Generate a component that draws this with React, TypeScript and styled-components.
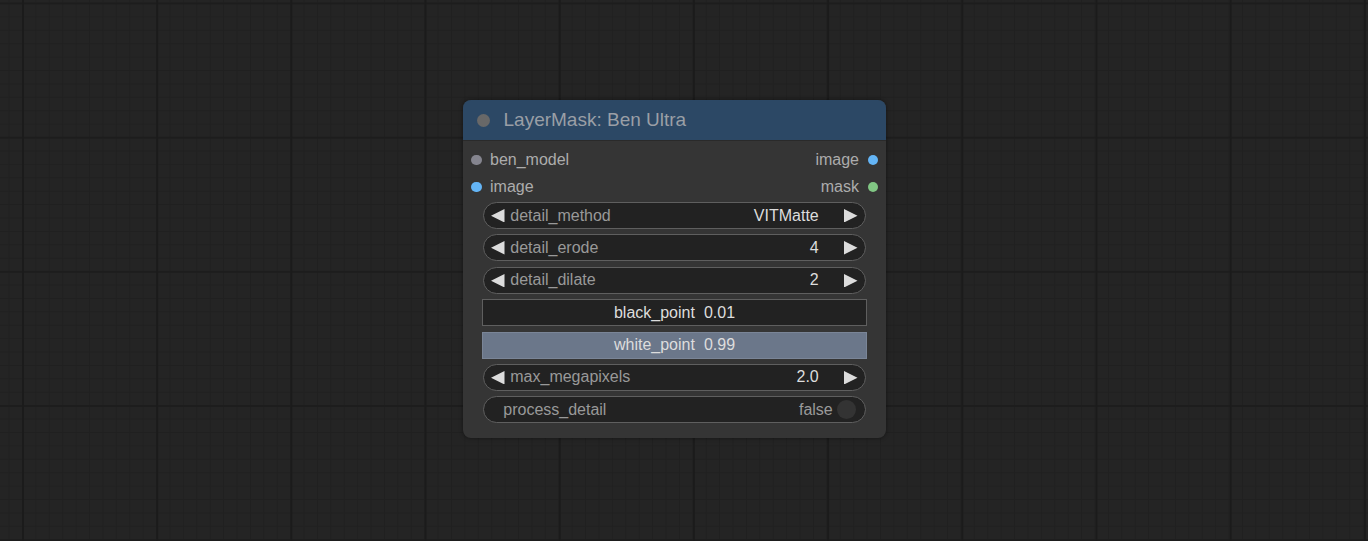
import React from "react";
import styled, { createGlobalStyle } from "styled-components";

const GlobalStyle = createGlobalStyle`
  html, body { margin: 0; padding: 0; background: #232323; }
  body { font-family: "Liberation Sans", Arial, sans-serif; }
`;

const Canvas = styled.div`
  position: relative;
  width: 1368px;
  height: 541px;
  overflow: hidden;
  background-color: #242424;
  background-image:
    linear-gradient(to right, #1b1b1b 0, #1b1b1b 2px, transparent 2px),
    linear-gradient(to bottom, #1d1d1d 0, #1d1d1d 2px, transparent 2px),
    linear-gradient(to right, #202020 0, #202020 1px, transparent 1px),
    linear-gradient(to bottom, #202020 0, #202020 1px, transparent 1px);
  background-size: 134.2px 100%, 100% 134.2px, 13.42px 100%, 100% 13.42px;
  background-position: 22px 0, 0 2.5px, 8.6px 0, 0 3px;
`;

const Node = styled.div`
  position: absolute;
  left: 463px;
  top: 100px;
  width: 423px;
  border-radius: 8px;
  background: #353535;
  box-shadow: 0 0 4px rgba(0, 0, 0, 0.45);
  font-family: "Liberation Sans", Arial, sans-serif;
`;

const Title = styled.div`
  height: 40.5px;
  display: flex;
  align-items: center;
  gap: 14px;
  padding-left: 13.5px;
  padding-top: 1px;
  background: #2c4865;
  border-radius: 8px 8px 0 0;
  border-bottom: 1px solid #2a2a2a;
  box-sizing: border-box;
  color: #9a9fa6;
  font-size: 19px;
`;

const TitleDot = styled.span`
  width: 13px;
  height: 13px;
  border-radius: 50%;
  background: #686868;
`;

const Body = styled.div`
  padding: 6px 20.25px 15px;
  display: flex;
  flex-direction: column;
`;

const SlotRow = styled.div`
  height: 27px;
  margin: 0 -20.25px;
  display: flex;
  align-items: center;
  justify-content: space-between;
  font-size: 16px;
  color: #acacac;
`;

const Slot = styled.div<{ $out?: boolean }>`
  display: flex;
  align-items: center;
  flex-direction: ${(p) => (p.$out ? "row-reverse" : "row")};
  gap: 8.5px;
  padding: 0 8px;
`;

const SlotDot = styled.span<{ $color: string }>`
  width: 10.5px;
  height: 10.5px;
  border-radius: 50%;
  background: ${(p) => p.$color};
`;

const Widgets = styled.div`
  margin-top: 1.5px;
  display: flex;
  flex-direction: column;
  gap: 5.4px;
`;

const Pill = styled.div`
  height: 27px;
  box-sizing: border-box;
  border: 1px solid #5f5f5f;
  border-radius: 14px;
  background: #222222;
  display: flex;
  align-items: center;
  padding: 0 7px;
  font-size: 16px;
`;

const Arrow = styled.svg`
  width: 13.5px;
  height: 13.5px;
  flex: none;
  fill: #dcdcdc;
`;

const Label = styled.span<{ $indent?: number }>`
  flex: 1;
  color: #999999;
  margin-left: ${(p) => p.$indent ?? 5.5}px;
`;

const Value = styled.span`
  color: #dddddd;
  margin-right: 25.5px;
`;

const ToggleValue = styled.span`
  color: #9a9a9a;
  margin-right: 4px;
`;

const Knob = styled.span`
  width: 19px;
  height: 19px;
  border-radius: 50%;
  background: #333333;
  margin-right: 2px;
`;

const Slider = styled.div<{ $active?: boolean }>`
  height: 27px;
  margin: 0 -1px;
  box-sizing: border-box;
  border: 1px solid ${(p) => (p.$active ? "#7a8597" : "#5f5f5f")};
  background: ${(p) => (p.$active ? "#6b778a" : "#222222")};
  display: flex;
  align-items: center;
  justify-content: center;
  gap: 9px;
  font-size: 16px;
  color: #dddddd;
`;

const LeftArrow = () => (
  <Arrow viewBox="0 0 10 10">
    <polygon points="10,0 0,5 10,10" />
  </Arrow>
);

const RightArrow = () => (
  <Arrow viewBox="0 0 10 10">
    <polygon points="0,0 10,5 0,10" />
  </Arrow>
);

const Combo = ({ label, value }: { label: string; value: string }) => (
  <Pill>
    <LeftArrow />
    <Label>{label}</Label>
    <Value>{value}</Value>
    <RightArrow />
  </Pill>
);

export default function App() {
  return (
    <>
      <GlobalStyle />
      <Canvas>
        <Node>
          <Title>
            <TitleDot />
            LayerMask: Ben Ultra
          </Title>
          <Body>
            <SlotRow>
              <Slot>
                <SlotDot $color="#85858f" />
                ben_model
              </Slot>
              <Slot $out>
                <SlotDot $color="#64b5f6" />
                image
              </Slot>
            </SlotRow>
            <SlotRow>
              <Slot>
                <SlotDot $color="#64b5f6" />
                image
              </Slot>
              <Slot $out>
                <SlotDot $color="#81c784" />
                mask
              </Slot>
            </SlotRow>
            <Widgets>
              <Combo label="detail_method" value="VITMatte" />
              <Combo label="detail_erode" value="4" />
              <Combo label="detail_dilate" value="2" />
              <Slider>
                <span>black_point</span>
                <span>0.01</span>
              </Slider>
              <Slider $active>
                <span>white_point</span>
                <span>0.99</span>
              </Slider>
              <Combo label="max_megapixels" value="2.0" />
              <Pill>
                <Label $indent={12}>process_detail</Label>
                <ToggleValue>false</ToggleValue>
                <Knob />
              </Pill>
            </Widgets>
          </Body>
        </Node>
      </Canvas>
    </>
  );
}
